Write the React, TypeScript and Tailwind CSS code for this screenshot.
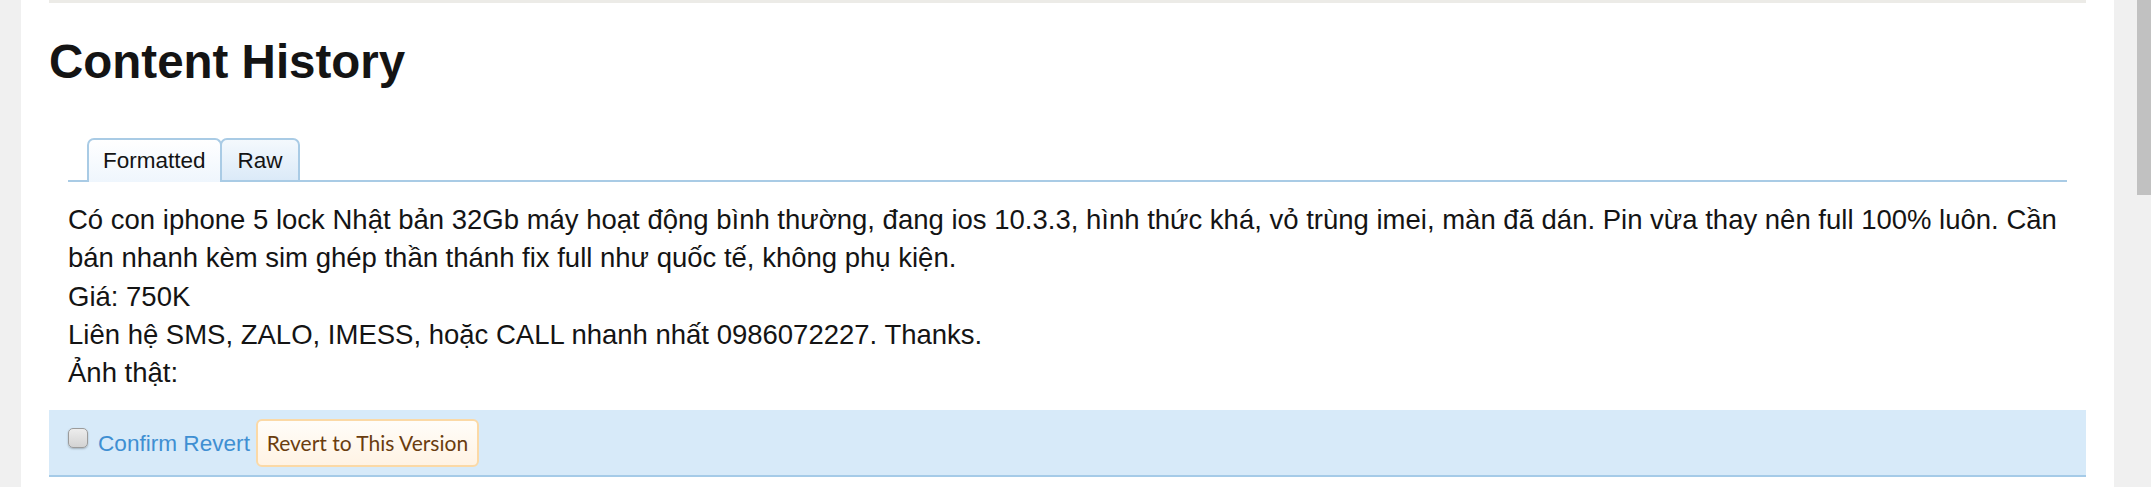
import React from "react";

export default function App() {
  return (
    <div className="flex h-[487px] w-[2151px] overflow-hidden bg-[#f0f0f0] font-['Liberation_Sans',Arial,sans-serif] text-[#141414]">
      <div className="w-[21px] shrink-0" />
      <div className="w-[2093px] shrink-0 bg-white px-[28px]">
        <div className="h-[3px] bg-[#ecebe7]" />
        <h1 className="mt-[35px] text-[47.5px] font-bold leading-[47px]">Content History</h1>

        <div className="mx-[19px] mt-[53px] flex border-b-2 border-[#a9cbe5] pl-[19px]">
          <div className="relative z-10 -mb-[2px] rounded-t-[7px] border-2 border-b-0 border-[#a9cbe5] bg-gradient-to-b from-white to-[#eff6fd] px-[14px] pt-[8px] pb-[8px] text-[22.5px] leading-[26px]">
            Formatted
          </div>
          <div className="-mb-[2px] -ml-[2px] rounded-t-[7px] border-2 border-[#a9cbe5] bg-gradient-to-b from-[#f4f9fd] to-[#dbeaf8] pl-[16px] pr-[15px] pt-[8px] pb-[6px] text-[22.5px] leading-[26px]">
            Raw
          </div>
        </div>

        <div className="mx-[19px] mt-[19px] whitespace-nowrap text-[27.5px] leading-[38.3px]">
          <div>
            Có con iphone 5 lock Nhật bản 32Gb máy hoạt động bình thường, đang ios 10.3.3, hình thức khá, vỏ trùng imei, màn đã dán. Pin vừa thay nên full 100% luôn. Cần
          </div>
          <div>bán nhanh kèm sim ghép thần thánh fix full như quốc tế, không phụ kiện.</div>
          <div>Giá: 750K</div>
          <div>Liên hệ SMS, ZALO, IMESS, hoặc CALL nhanh nhất 0986072227. Thanks.</div>
          <div>Ảnh thật:</div>
        </div>

        <div className="mt-[18px] flex h-[67px] items-center border-b-2 border-[#a5cbe8] bg-[#d7eaf9] pl-[19px]">
          <span className="mb-[10px] h-[20px] w-[20px] shrink-0 rounded-[5px] border border-[#9b9b9b] bg-gradient-to-b from-[#ededed] to-[#d3d3d3] shadow-[0_1px_2px_rgba(0,0,0,0.25)]" />
          <span className="ml-[10px] mt-[2px] text-[22.6px] leading-[26px] text-[#3f8fd2]">Confirm Revert</span>
          <span className="ml-[6px] flex h-[48px] w-[223px] items-center justify-center rounded-[6px] border-2 border-[#fbd9a6] bg-gradient-to-b from-[#fffdf9] to-[#fff3e4] font-['Lato','Noto_Sans',sans-serif] text-[21px] leading-[24px] text-[#6a3d0f]">
            Revert to This Version
          </span>
        </div>
      </div>
      <div className="relative w-[37px] shrink-0">
        <div className="absolute right-0 top-0 h-[195px] w-[14px] bg-[#c1c1c1]" />
      </div>
    </div>
  );
}
